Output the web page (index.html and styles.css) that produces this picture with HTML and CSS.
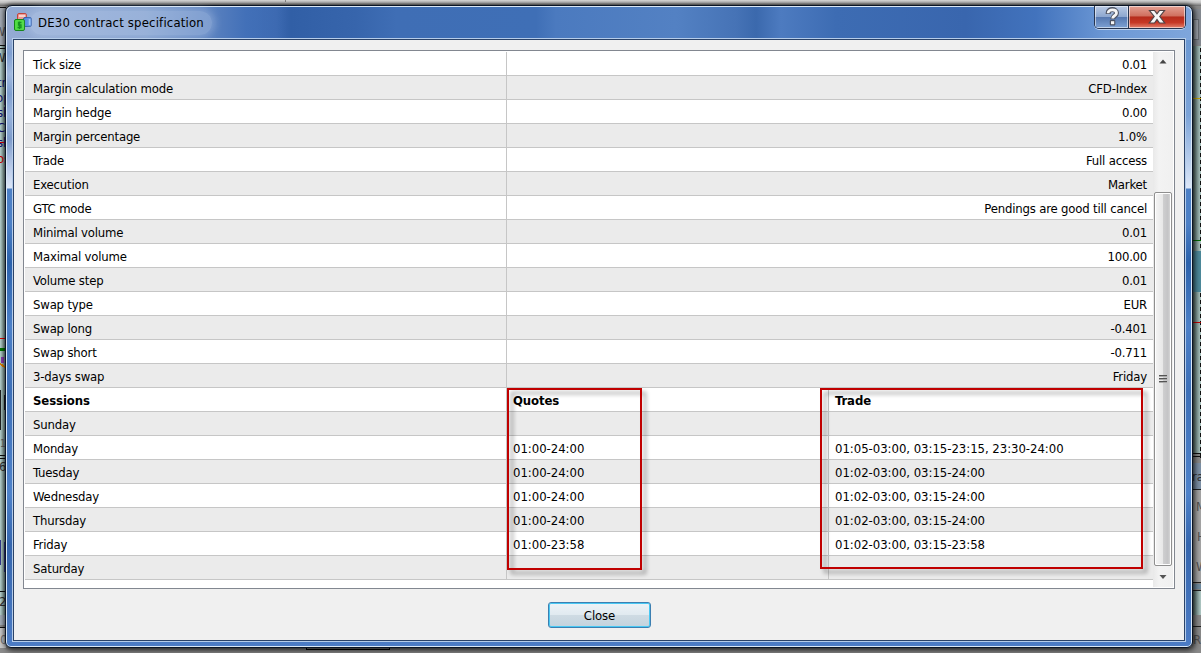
FILE: index.html
```
<!DOCTYPE html>
<html lang="en">
<head>
<meta charset="utf-8">
<title>DE30 contract specification</title>
<link rel="stylesheet" href="styles.css">
</head>
<body>
<div class="desktop">
  <svg class="backdrop" width="1201" height="653" viewBox="0 0 1201 653" shape-rendering="crispEdges">
    <defs>
      <linearGradient id="top" x1="0" y1="0" x2="0" y2="1"><stop offset="0" stop-color="#dadada"/><stop offset=".4" stop-color="#c4c4c4"/><stop offset="1" stop-color="#6d6d6d"/></linearGradient>
      <linearGradient id="left" x1="0" y1="0" x2="1" y2="0"><stop offset="0" stop-color="#b9d3d0"/><stop offset="1" stop-color="#7e9894"/></linearGradient>
      <linearGradient id="right" x1="0" y1="0" x2="1" y2="0"><stop offset="0" stop-color="#617a76"/><stop offset="1" stop-color="#b3cdc9"/></linearGradient>
    </defs>
    <rect width="1201" height="653" fill="#8b8b8b"/>
    <rect width="1201" height="6" fill="url(#top)"/>
    <path d="M285.500 0V2" stroke="#888"/>
    <rect y="8" width="5" height="38" fill="#a4abb4"/>
    <rect y="46" width="5" height="569" fill="url(#left)"/>
    <path d="M0 7.500H6M0 45.500H6M0 48.500H6M0 455.500H6M0 458.500H6M0 591.500H6M0 627.500H6" stroke="#111"/>
    <path d="M0 142.500H6M0 338.500H6" stroke="#d00"/>
    <path d="M0 349.500H6" stroke="#070" stroke-width="3"/>
    <path d="M2 357V363" stroke="#8a3fb0" stroke-width="3"/>
    <path d="M0 364L5 367" stroke="#e08000" stroke-width="2"/>
    <path d="M.5 390V430M4.500 395V410" stroke="#222"/>
    <path d="M.5 540V565M4.500 542V572" stroke="#34388e"/>
    <rect y="615" width="6" height="10" fill="#a3adb8"/>
    <rect y="628" width="6" height="20" fill="#c8c8c8"/>
    <rect x="1193" y="9" width="8" height="36" fill="#868b92"/>
    <rect x="1193" y="19" width="5" height="20" fill="#a2a7ae" stroke="#6a6f75"/>
    <rect x="1193" y="46" width="8" height="407" fill="url(#right)"/>
    <path d="M1200.500 48V458" stroke="#111" stroke-width="2" stroke-dasharray="4 3"/>
    <path d="M1193 98.500H1201" stroke="#cda900"/>
    <path d="M1193 240.500H1201" stroke="#006a00"/>
    <rect x="1193" y="251" width="8" height="41" fill="#4e8b9d"/>
    <path d="M1193 322.500H1201" stroke="#c00"/>
    <path d="M1193 453.500H1201M1193 456.500H1201" stroke="#111"/>
    <rect x="1193" y="463" width="8" height="26" fill="#7e92a8"/>
    <rect x="1193" y="490" width="8" height="92" fill="#a7a7a7"/>
    <rect x="1193" y="584" width="8" height="5" fill="#718da2"/>
    <path d="M1193 489.500H1201M1193 582.500H1201M1193 590.500H1201M1193 626.500H1201" stroke="#222"/>
    <rect x="1193" y="591" width="8" height="24" fill="url(#right)"/>
    <path d="M306.500 648V649.500H389.500V648" fill="none" stroke="#000"/>
  </svg>
  <span class="peek p0">W</span><span class="peek p1">W</span><span class="peek p2 navy">tr</span><span class="peek p3 navy">op</span><span class="peek p4 navy">sk</span><span class="peek p5 navy">C</span><span class="peek p6 navy">sk</span><span class="peek p7 red">os</span><span class="peek p10">1</span><span class="peek p8">6</span><span class="peek p9">2</span><span class="peek p11">0</span>
  <span class="peek r1">ra</span><span class="peek r2">M</span><span class="peek r3">H</span><span class="peek r4">W</span><span class="peek r5">RI</span>

  <section class="window">
    <header class="titlebar">
      <svg class="app-icon" width="20" height="20" viewBox="0 0 20 20">
        <rect x="4.500" y="1.500" width="9" height="7" rx="1.500" fill="#ee9a92" stroke="#c2443c"/>
        <path d="M6 4H12" stroke="#f9d3cf" stroke-width="2"/>
        <rect x="10.500" y="5.500" width="8" height="9" rx="1.500" fill="#4b86dc" stroke="#2a56a5"/>
        <path d="M16.500 7V13" stroke="#95bdf1" stroke-width="1.500"/>
        <rect x="1.500" y="7.500" width="10" height="11" rx="1.500" fill="#4fdc44" stroke="#16851a"/>
        <path d="M8.500 10.500H5.500V13H8V15.500H4.500M6.500 9.500V17" fill="none" stroke="#159321" stroke-width="1.300"/>
      </svg>
      <h1 class="title">DE30 contract specification</h1>
      <div class="caption-buttons">
        <button class="cap help" aria-label="Help"><svg width="34" height="22" viewBox="0 0 34 22"><path d="M13.200 8V6.800C13.200 2.500 21.500 2.500 21.500 6.900C21.500 10 17.700 9.500 17.700 13.200" fill="none" stroke="#4c5262" stroke-width="5"/><rect x="14.800" y="14" width="5.500" height="5.500" rx="1" fill="#4c5262"/><path d="M13.200 7.300V6.800C13.200 3 21.500 3 21.500 6.900C21.500 10 17.700 9.500 17.700 12.500" fill="none" stroke="#f5f5f5" stroke-width="2.800"/><rect x="16" y="15.200" width="3.200" height="3" fill="#f5f5f5"/></svg></button>
        <button class="cap exit" aria-label="Close window"><svg width="56" height="22" viewBox="0 0 56 22"><path d="M20.500 4.500H25.500L28 7.800L30.500 4.500H35.500L30.800 10.500L35.700 17H30.500L28 13.600L25.500 17H20.300L25.200 10.500Z" fill="#f7f7f7" stroke="#514447" stroke-width="1.200"/></svg></button>
      </div>
    </header>
    <main class="client">
      <div class="list">
        <div class="rows">
          <div class="row"><span>Tick size</span><b class="num">0.01</b></div>
          <div class="row"><span>Margin calculation mode</span><b>CFD-Index</b></div>
          <div class="row"><span>Margin hedge</span><b class="num">0.00</b></div>
          <div class="row"><span>Margin percentage</span><b>1.0%</b></div>
          <div class="row"><span>Trade</span><b>Full access</b></div>
          <div class="row"><span>Execution</span><b>Market</b></div>
          <div class="row"><span>GTC mode</span><b>Pendings are good till cancel</b></div>
          <div class="row"><span>Minimal volume</span><b class="num">0.01</b></div>
          <div class="row"><span>Maximal volume</span><b class="num">100.00</b></div>
          <div class="row"><span>Volume step</span><b class="num">0.01</b></div>
          <div class="row"><span>Swap type</span><b>EUR</b></div>
          <div class="row"><span>Swap long</span><b>-0.401</b></div>
          <div class="row"><span>Swap short</span><b>-0.711</b></div>
          <div class="row"><span>3-days swap</span><b>Friday</b></div>
          <div class="row session head"><span>Sessions</span><span>Quotes</span><span>Trade</span></div>
          <div class="row session"><span>Sunday</span><span></span><span></span></div>
          <div class="row session"><span>Monday</span><span>01:00-24:00</span><span>01:05-03:00, 03:15-23:15, 23:30-24:00</span></div>
          <div class="row session"><span>Tuesday</span><span>01:00-24:00</span><span>01:02-03:00, 03:15-24:00</span></div>
          <div class="row session"><span>Wednesday</span><span>01:00-24:00</span><span>01:02-03:00, 03:15-24:00</span></div>
          <div class="row session"><span>Thursday</span><span>01:00-24:00</span><span>01:02-03:00, 03:15-24:00</span></div>
          <div class="row session"><span>Friday</span><span>01:00-23:58</span><span>01:02-03:00, 03:15-23:58</span></div>
          <div class="row session"><span>Saturday</span><span></span><span></span></div>
        </div>
        <div class="scrollbar">
          <svg class="arrow" width="18" height="18" viewBox="0 0 18 18"><path d="M5.500 11.500L9 7.500L12.500 11.500Z" fill="#444"/></svg>
          <div class="track"><div class="thumb"><i></i><i></i><i></i></div></div>
          <svg class="arrow" width="18" height="18" viewBox="0 0 18 18"><path d="M5.500 6L9 10L12.500 6Z" fill="#555"/></svg>
        </div>
      </div>
      <footer class="actions"><button class="close">Close</button></footer>
    </main>
  </section>
  <div class="mark quotes"></div>
  <div class="mark trade"></div>
</div>
</body>
</html>
```

FILE: styles.css
```
* { box-sizing: border-box; }
body { margin: 0; font: 13px/24px "DejaVu Sans Condensed", "DejaVu Sans", sans-serif; font-stretch: condensed; color: #000; }
.desktop { position: relative; width: 1201px; height: 653px; overflow: hidden; }
.backdrop { display: block; }

/* Fragments of the application behind the dialog */
.peek { position: absolute; left: -3px; white-space: nowrap; line-height: 14px; color: #333; }
.navy { color: #101070; }
.red { color: #d00000; }
.p0 { top: 25px; left: -6px; color: #555; }
.p1 { top: 51px; left: -6px; } .p2 { top: 76px; } .p3 { top: 91px; left: -4px; } .p4 { top: 106px; } .p5 { top: 121px; }
.p6 { top: 136px; } .p7 { top: 152px; } .p8 { top: 460px; left: -1px; } .p9 { top: 595px; left: -1px; }
.p10 { top: 437px; left: 0; font-size: 10px; color: #666; } .p11 { top: 633px; left: 0; color: #777; }
.r1, .r2, .r3, .r4, .r5 { left: 1193px; }
.r1 { top: 470px; left: 1192px; } .r2 { top: 500px; left: 1196px; color: #555; } .r3 { top: 530px; left: 1197px; color: #555; }
.r4 { top: 560px; left: 1196px; color: #555; } .r5 { top: 633px; color: #555; }

/* Glass window frame */
.window {
  position: absolute; left: 5px; top: 5px; width: 1188px; height: 643px;
  display: flex; flex-direction: column; padding: 1px 6px 6px;
  border: 1px solid #0a1526; border-radius: 7px 7px 6px 6px;
  background:
    linear-gradient(180deg, #94abd3 0, #7f9fd0 14px, #a1b9de 35px, #7f9fd0 55px, #98b3dc 75px, #7d9bcb 100px, #b9cae8 128px, #dbe6f7 149px, transparent 150px) left 0 top 33px / 8px 150px no-repeat,
    linear-gradient(180deg, #6b98d2 0, #7ba3d8 75px, #dce7f8 148px, transparent 149px) right 0 top 34px / 8px 149px no-repeat,
    linear-gradient(90deg, #94abd3 0, #7f9dcc 140px, #5d83c0 200px, #4270b8 240px, transparent 280px) 0 0 / 100% 34px no-repeat,
    linear-gradient(90deg, #406fb6 0, #3b68b0 270px, #315fa6 285px, #3765ac 350px, #3f6eb5 390px, #3f6fb6 530px, #4b7abf 550px, #5381c3 670px, #4673b6 730px, #3b69ad 750px, #4d7bc0 775px, #3d6cb3 830px, #3966ae 960px, #4273bd 1030px, #6c98d5 1100px, #7fa6dc 100%) 0 0 / 100% 34px no-repeat,
    linear-gradient(180deg, #4c80c6 0, #4c80c6 34%, #2b62ac 40%, #4c80c8 50%, #3d70b8 60%, #4e82ca 76%, #3566ae 84%, #4c7cc5 100%);
  background-clip: padding-box;
  box-shadow: inset 0 0 0 1px #d9e7f5, 0 0 4px 1px rgba(0,0,0,.6), 2px 3px 7px rgba(0,0,0,.45);
}
.titlebar { height: 31px; flex: none; display: flex; align-items: flex-start; padding-left: 1px; }
.app-icon { margin-top: 5px; }
.title {
  margin: 4px 0 0 -3px; padding: 0 8px; font-weight: 400; font-size: 13px; line-height: 24px; white-space: nowrap; letter-spacing: .18px;
  border-radius: 12px; background: rgba(205,221,245,.32); box-shadow: 0 0 8px 3px rgba(205,221,245,.32);
}
.caption-buttons { display: flex; margin-left: auto; margin-top: -1px; height: 23px; border: 1px solid #26344f; border-top: 0; border-radius: 0 0 5px 5px; overflow: hidden; box-shadow: 0 1px 0 #bdd2ef; }
.cap { padding: 0; border: 0; height: 22px; display: block; box-shadow: inset 0 0 0 1px rgba(255,255,255,.55); }
.cap svg { display: block; }
.help { width: 34px; background: linear-gradient(#b9c9e3 0, #8ea8d0 48%, #5577ae 50%, #7da1d4 100%); border-right: 1px solid #26344f; }
.exit { width: 56px; background: linear-gradient(#e4a093 0, #d0705f 45%, #b52c1c 50%, #c63725 75%, #e3826e 100%); }

/* Dialog content */
.client {
  flex: 1; min-height: 0; display: flex; flex-direction: column; padding: 10px 9px 0;
  border: 1px solid #2b4368; background: #f0f0f0; box-shadow: 0 0 0 1px #b6cdea; margin: 1px 1px 0;
}
.list { height: 539px; flex: none; display: flex; border: 1px solid #828790; background: #fff; padding: 1px; }
.rows { flex: 1; }
.row { height: 24px; display: grid; grid-template-columns: 482px 1fr; border-bottom: 1px solid #c6c6c6; line-height: 25px; white-space: nowrap; letter-spacing: -.18px; }
.row:nth-child(even) { background: #ebebeb; }
.row > * { padding: 0 8px; border-right: 1px solid #c6c6c6; font-weight: 400; height: 23px; }
.row > :last-child { border-right: 0; }
.row b { text-align: right; padding-right: 6px; }
.row .num { letter-spacing: -.25px; }
.session { grid-template-columns: 482px 322px 1fr; }
.session > * + * { padding-left: 6px; letter-spacing: -.03px; }
.head > * { font-weight: 700; letter-spacing: -.1px; }

.scrollbar { width: 20px; padding-right: 1px; flex: none; display: flex; flex-direction: column; align-items: center; background: linear-gradient(90deg, #e9e9e9, #f3f3f3 30%, #f0f0f0); }
.arrow { flex: none; }
.track { flex: 1; width: 18px; display: flex; flex-direction: column; padding: 122px 0 3px; }
.thumb {
  flex: 1; border: 1px solid #8f8f8f; border-radius: 2px; box-shadow: inset 0 0 0 1px #fff;
  background: linear-gradient(90deg, #f5f5f5 0, #e8e8e8 48%, #cfcfd0 50%, #c4c4c6 80%, #dcdcdc 100%);
  display: flex; flex-direction: column; align-items: center; justify-content: center; gap: 1px;
}
.thumb i { width: 8px; height: 2px; background: linear-gradient(#555 50%, #aaa 50%); }

.actions { display: flex; justify-content: center; padding-top: 13px; }
.close {
  width: 103px; height: 26px; margin-left: 1px; padding: 1px 0 0; font: inherit; line-height: 23px; color: #000; letter-spacing: -.1px;
  border: 1px solid #3c7fb1; border-radius: 3px; box-shadow: inset 0 0 0 1px #48c8f3;
  background: linear-gradient(#edf3f7 0, #e1eaf0 48%, #cfdbe3 50%, #c3d3dd 100%);
}

/* Annotation frames drawn over the list */
.mark { position: absolute; top: 388px; border: 2px solid #c00000; filter: drop-shadow(4px 4px 2px rgba(0,0,0,.4)); }
.quotes { left: 507px; width: 135px; height: 182px; }
.trade { left: 820px; width: 323px; height: 181px; }
```
